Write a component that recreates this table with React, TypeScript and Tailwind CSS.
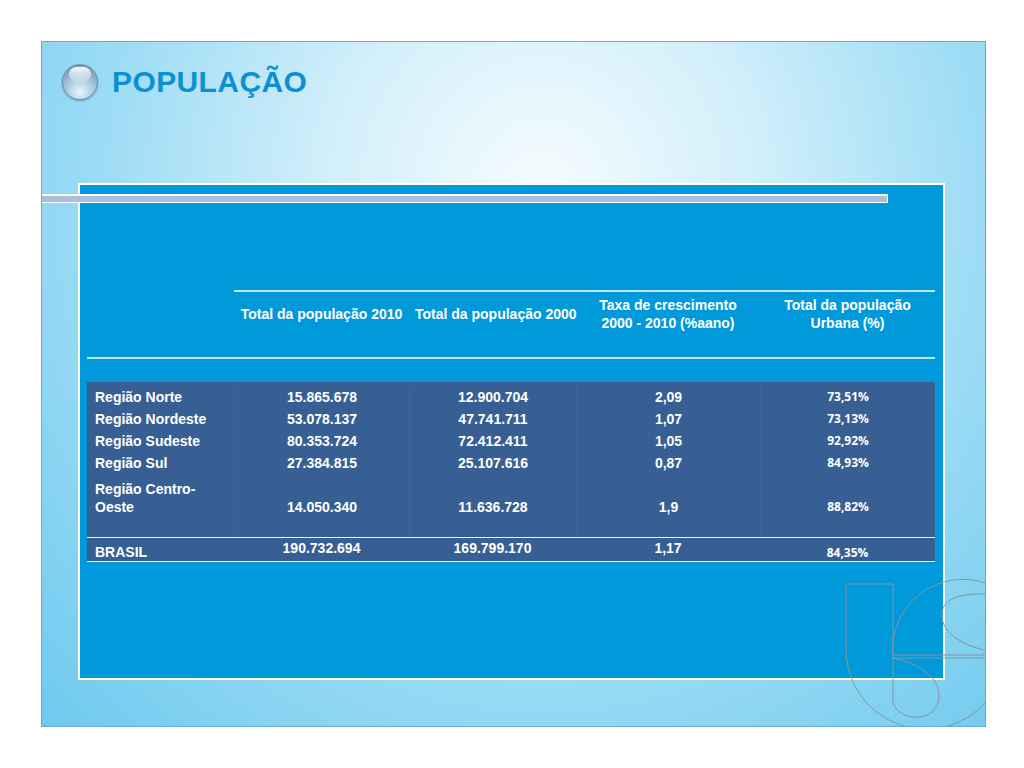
import type { ReactNode } from "react";

type Row = {
  region: ReactNode;
  total2010: string;
  total2000: string;
  rate: string;
  urban: string;
};

const rows: Row[] = [
  { region: "Região Norte", total2010: "15.865.678", total2000: "12.900.704", rate: "2,09", urban: "73,51%" },
  { region: "Região Nordeste", total2010: "53.078.137", total2000: "47.741.711", rate: "1,07", urban: "73,13%" },
  { region: "Região Sudeste", total2010: "80.353.724", total2000: "72.412.411", rate: "1,05", urban: "92,92%" },
  { region: "Região Sul", total2010: "27.384.815", total2000: "25.107.616", rate: "0,87", urban: "84,93%" },
];

const cols = "grid grid-cols-[147px_175px_167px_184px_175px]";
const sep = "border-l border-[#3f6699]";

function LogoOutline() {
  return (
    <svg
      className="pointer-events-none absolute inset-0"
      width="945"
      height="686"
      viewBox="0 0 945 686"
      fill="none"
      stroke="#8595a2"
      strokeWidth="1"
    >
      <path d="M804 542 H851 V659" />
      <path d="M804 542 V603 A80 80 0 0 0 948 655" />
      <path d="M851 613 A70 70 0 0 1 946 542" />
      <path d="M851 613 H946 M851 616 H946" />
      <path d="M946 609 C915 602 898 588 900 570 C902 556 920 551 946 552" />
      <path d="M851 616 C880 622 898 637 897 655 C896 672 880 678 866 674 C857 671 852 666 851 659" />
    </svg>
  );
}

function Bead() {
  return (
    <div className="relative h-[36px] w-[36px] rounded-full border border-[#6f8ea6] bg-[radial-gradient(circle_at_50%_78%,#e3f4fb_0%,#b4d3e4_35%,#86a7bf_70%,#5f7f99_100%)] shadow-[0_1px_2px_rgba(0,50,90,0.4)]">
      <div className="absolute left-[6px] top-[2px] h-[15px] w-[22px] rounded-full bg-[linear-gradient(to_bottom,rgba(255,255,255,0.95),rgba(255,255,255,0.15))]" />
    </div>
  );
}

export default function App() {
  return (
    <div className="h-[768px] w-[1024px] bg-white pl-[41px] pt-[41px] font-['Liberation_Sans',Arial,sans-serif]">
      <div className="relative h-[686px] w-[945px] overflow-hidden border border-[#69a9cc] bg-[radial-gradient(ellipse_75%_110%_at_53%_22%,#f6fcfe_0%,#d2effa_30%,#9ddcf5_62%,#6ec9ee_100%)]">
        {/* title */}
        <div className="flex items-center pl-[20px] pt-[22px]">
          <Bead />
          <h1 className="ml-[14px] text-[30px] font-bold leading-none tracking-[0.4px] text-[#0b91d3]">
            POPULAÇÃO
          </h1>
        </div>

        {/* panel */}
        <div className="ml-[36px] mt-[83px] h-[497px] w-[867px] border-2 border-white bg-[#0099da] pl-[7px] pt-[105px] text-[14px] font-bold text-white">
          <div className="w-[848px]">
            <div className="ml-[147px] border-t-2 border-[#bfe7f8] pt-[4px]">
              <div className="grid h-[36px] grid-cols-[175px_167px_184px_175px] items-center text-center leading-[18px]">
                <div className="whitespace-nowrap">Total da população 2010</div>
                <div className="whitespace-nowrap pl-[6px]">Total da população 2000</div>
                <div>
                  Taxa de crescimento
                  <br />
                  2000 - 2010 (%aano)
                </div>
                <div>
                  Total da população
                  <br />
                  Urbana (%)
                </div>
              </div>
            </div>
            <div className="mt-[25px] border-t-2 border-[#bfe7f8]" />

            <div className="mt-[23px] bg-[#375f93] pt-[4px]">
              {rows.map((row) => (
                <div key={row.total2010} className={`${cols} h-[22px] items-center leading-[22px]`}>
                  <div className="pl-[8px]">{row.region}</div>
                  <div className={`${sep} text-center`}>{row.total2010}</div>
                  <div className={`${sep} text-center`}>{row.total2000}</div>
                  <div className={`${sep} text-center`}>{row.rate}</div>
                  <div className={`${sep} text-center font-['Open_Sans',sans-serif] text-[12px]`}>{row.urban}</div>
                </div>
              ))}

              <div className={`${cols} h-[43px] items-end leading-[18px]`}>
                <div className="pb-[1px] pl-[8px]">
                  Região Centro-
                  <br />
                  Oeste
                </div>
                <div className={`${sep} h-full pb-[1px] pt-[24px] text-center`}>14.050.340</div>
                <div className={`${sep} h-full pb-[1px] pt-[24px] text-center`}>11.636.728</div>
                <div className={`${sep} h-full pb-[1px] pt-[24px] text-center`}>1,9</div>
                <div className={`${sep} h-full pb-[1px] pt-[24px] text-center font-['Open_Sans',sans-serif] text-[12px]`}>88,82%</div>
              </div>

              <div className={`${cols} h-[20px]`}>
                <div />
                <div className={sep} />
                <div className={sep} />
                <div className={sep} />
                <div className={sep} />
              </div>

              <div className={`${cols} h-[25px] items-start border-y-[1.5px] border-[#e6f3fa] leading-[16px]`}>
                <div className="pl-[8px] pt-[6px]">BRASIL</div>
                <div className="pt-[2px] text-center">190.732.694</div>
                <div className="pt-[2px] text-center">169.799.170</div>
                <div className="pt-[2px] text-center">1,17</div>
                <div className="pt-[9px] text-center font-['Open_Sans',sans-serif] text-[12px] leading-[12px]">84,35%</div>
              </div>
            </div>
          </div>
        </div>

        {/* bar crossing the panel */}
        <div className="absolute left-0 top-[152px] h-[9px] w-[846px] border-y border-r border-t-2 border-white bg-[#a9c0da]" />

        <LogoOutline />
      </div>
    </div>
  );
}
